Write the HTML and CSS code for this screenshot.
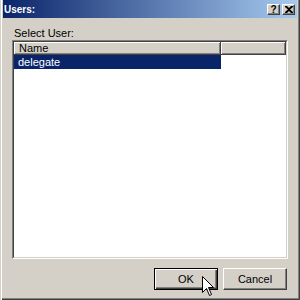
FILE: index.html
```html
<!DOCTYPE html>
<html>
<head>
<meta charset="utf-8">
<link rel="stylesheet" href="styles.css">
</head>
<body>
<div class="window">
  <div class="titlebar">
    <span class="title">Users:</span>
    <div class="caption-buttons">
      <div class="cbtn help">?</div>
      <div class="cbtn close">
        <svg width="8" height="7" viewBox="0 0 8 7"><path d="M0 0h2l2 2 2-2h2v1L5 3.5 8 6v1H6L4 5 2 7H0V6l3-2.5L0 1z" fill="#000"/></svg>
      </div>
    </div>
  </div>
  <div class="content">
    <div class="label">Select User:</div>
    <div class="listbox">
      <div class="listinner">
        <div class="header">
          <div class="hcell">Name</div>
          <div class="hcell"></div>
        </div>
        <div class="row selected">
          <div class="cell">delegate</div>
          <div class="cell blank"></div>
        </div>
      </div>
    </div>
    <div class="buttons">
      <div class="btn default"><span class="btn-inner">OK</span></div>
      <div class="btn"><span class="btn-inner">Cancel</span></div>
    </div>
  </div>
  <svg class="cursor" width="13" height="21" viewBox="0 0 13 21"><path d="M0.5 0.5 L0.5 16.5 L4.5 12.5 L7.5 19.5 L9.5 18.5 L6.5 11.5 L11.5 11.5 Z" fill="#fff" stroke="#000" stroke-width="1"/></svg>
</div>
</body>
</html>
```
FILE: styles.css
```css
html, body {
  margin: 0;
  padding: 0;
  background: #d4d0c8;
}
.window {
  position: relative;
  width: 300px;
  height: 300px;
  box-sizing: border-box;
  padding: 0 3px 3px 3px;
  background: #d4d0c8;
  display: flex;
  flex-direction: column;
  font-family: "Liberation Sans", Arial, sans-serif;
  font-size: 11px;
  color: #000;
  box-shadow: inset 1px 0 #d4d0c8, inset 2px 0 #fff, inset -1px -1px #404040, inset -2px -2px #808080;
}
.titlebar {
  height: 18px;
  display: flex;
  align-items: center;
  justify-content: space-between;
  background: linear-gradient(to right, #0a246a, #a6caf0);
  padding-left: 1px;
  padding-right: 2px;
}
.title {
  color: #fff;
  font-weight: bold;
  font-size: 10px;
}
.caption-buttons {
  display: flex;
  gap: 2px;
}
.cbtn {
  width: 13px;
  height: 11px;
  box-sizing: border-box;
  background: #d4d0c8;
  border: 1px solid;
  border-color: #fff #404040 #404040 #fff;
  box-shadow: inset -1px -1px #808080;
  display: flex;
  align-items: center;
  justify-content: center;
  font-weight: bold;
  font-size: 10px;
  line-height: 9px;
}
.content {
  flex: 1;
  display: flex;
  flex-direction: column;
  padding: 9px 9px 0 9px;
}
.label {
  height: 13px;
  line-height: 13px;
  padding-left: 2px;
}
.listbox {
  height: 219px;
  box-sizing: border-box;
  border: 1px solid;
  border-color: #808080 #fff #fff #808080;
}
.listinner {
  height: 100%;
  box-sizing: border-box;
  border: 1px solid;
  border-color: #404040 #d4d0c8 #d4d0c8 #404040;
  background: #fff;
}
.header, .row {
  display: grid;
  grid-template-columns: 207px 1fr;
}
.hcell {
  height: 13px;
  line-height: 12px;
  box-sizing: border-box;
  background: #d4d0c8;
  padding-left: 5px;
  border-right: 1px solid #404040;
  border-bottom: 1px solid #404040;
  box-shadow: inset 1px 1px #fff, inset -1px -1px #808080;
}
.row {
  height: 14px;
  line-height: 14px;
}
.cell {
  padding-left: 4px;
}
.selected .cell:first-child {
  background: #0a246a;
  color: #fff;
}
.buttons {
  display: flex;
  justify-content: flex-end;
  gap: 5px;
  margin-top: 9px;
  margin-right: 1px;
}
.btn {
  width: 64px;
  height: 22px;
  box-sizing: border-box;
  border: 1px solid;
  border-color: #fff #404040 #404040 #fff;
  box-shadow: inset -1px -1px #808080;
  display: flex;
  align-items: center;
  justify-content: center;
}
.btn.default {
  border: 1px solid #000;
  box-shadow: inset 1px 1px #fff, inset -1px -1px #404040, inset -2px -2px #808080;
}
.cursor {
  position: absolute;
  left: 202px;
  top: 276px;
}
```
